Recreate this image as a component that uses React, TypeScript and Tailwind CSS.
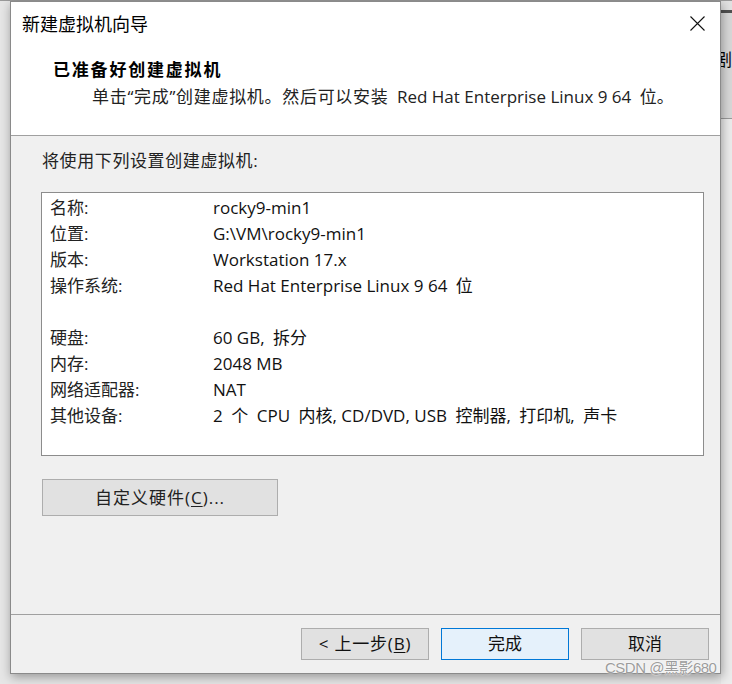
// en spaces ( ) stand for the wider gaps the dialog draws next to CJK runs
const rows: ([string, string] | null)[] = [
  ["名称:", "rocky9-min1"],
  ["位置:", "G:\\VM\\rocky9-min1"],
  ["版本:", "Workstation 17.x"],
  ["操作系统:", "Red Hat Enterprise Linux 9 64\u2002位"],
  null,
  ["硬盘:", "60 GB,\u2002拆分"],
  ["内存:", "2048 MB"],
  ["网络适配器:", "NAT"],
  ["其他设备:", "2\u2002个\u2002CPU\u2002内核, CD/DVD, USB\u2002控制器,\u2002打印机,\u2002声卡"],
];

const CloseIcon = () => (
  <svg width="15" height="15" viewBox="0 0 15 15">
    <path d="M0.5 0.5 L14.5 14.5 M14.5 0.5 L0.5 14.5" stroke="#111" strokeWidth="1.1" />
  </svg>
);

const App = () => {
  return (
    <div className="relative w-[732px] h-[684px] overflow-hidden bg-[#e6e6e6] font-['Open_Sans','Noto_Sans_CJK_SC',sans-serif] text-[17px] text-[#111]">
      <div className="h-[1px] bg-[#9a9a9a]" />
      <div className="flex h-[683px]">
        <div className="w-[10px] shrink-0" />

        {/* dialog window */}
        <div className="relative z-10 flex h-[673px] w-[711px] shrink-0 flex-col border border-[#8a8a8a] bg-[#f0f0f0] shadow-[1px_3px_10px_rgba(0,0,0,0.35)]">
          <div className="flex h-[134px] flex-col border-b border-[#a0a0a0] bg-white">
            <div className="flex h-[42px] items-center justify-between pl-[11px] pr-[15px]">
              <span className="font-['Noto_Sans_CJK_SC',sans-serif] text-[18px] leading-none text-black">
                新建虚拟机向导
              </span>
              <CloseIcon />
            </div>
            <p className="mt-[13px] pl-[42px] font-['Noto_Sans_CJK_SC',sans-serif] text-[17px] font-bold leading-[24px] tracking-[1.8px] text-black">
              已准备好创建虚拟机
            </p>
            <p className="mt-[4px] pl-[81px] leading-[24px] text-[#222]">
              <span className="tracking-[0.7px]">单击“完成”创建虚拟机。然后可以安装</span>
              {"\u2002"}Red Hat Enterprise Linux 9 64{"\u2002"}位。
            </p>
          </div>

          <div className="flex flex-1 flex-col">
            <p className="mt-[13px] pl-[31px] leading-[24px] tracking-[0.6px] text-[#222]">将使用下列设置创建虚拟机:</p>
            <div className="ml-[30px] mt-[19px] h-[264px] w-[663px] border border-[#8c8c8c] bg-white pl-[8px] pt-[2px]">
              {rows.map((r, i) =>
                r ? (
                  <div key={i} className="flex h-[26px] items-center">
                    <span className="w-[163px] shrink-0 text-[#222]">{r[0]}</span>
                    <span>{r[1]}</span>
                  </div>
                ) : (
                  <div key={i} className="h-[26px]" />
                )
              )}
            </div>
            <button className="ml-[31px] mt-[23px] flex h-[37px] w-[236px] items-center justify-center border border-[#adadad] bg-[#e1e1e1] tracking-[1px] text-[#222]">
              自定义硬件(<span className="underline underline-offset-2">C</span>)...
            </button>
          </div>

          <div className="flex h-[59px] justify-end gap-[12px] border-t border-[#a0a0a0] pr-[11px] pt-[13px]">
            <button className="flex h-[32px] w-[128px] items-center justify-center border border-[#adadad] bg-[#e1e1e1] tracking-[0.8px]">
              &lt; 上一步(<span className="underline underline-offset-2">B</span>)
            </button>
            <button className="flex h-[32px] w-[128px] items-center justify-center border border-[#0078d7] bg-[#e5f1fb]">
              完成
            </button>
            <button className="flex h-[32px] w-[128px] items-center justify-center border border-[#adadad] bg-[#e1e1e1]">
              取消
            </button>
          </div>
        </div>

        {/* background window peeking out on the right */}
        <div className="flex w-[11px] shrink-0 flex-col overflow-hidden">
          <div className="h-[9px] bg-[#e2e2e2]" />
          <div className="h-[3px] bg-[#505050]" />
          <div className="flex h-[105px] items-start bg-[#d8d8d8] pt-[37px]">
            <span className="-ml-[6px] font-['Noto_Sans_CJK_SC',sans-serif] text-[17px] leading-none text-black">剧</span>
          </div>
          <div className="h-[1px] bg-[#9a9a9a]" />
          <div className="flex-1 bg-[#ececec]" />
        </div>
      </div>

      <span className="absolute left-[605px] top-[657px] z-20 font-['Liberation_Sans','Noto_Sans_CJK_SC',sans-serif] text-[15px] tracking-[-0.5px] text-[#9c9c9c] [text-shadow:0_0_2px_#fff,0_0_1px_#fff]">
        CSDN @黑影680
      </span>
    </div>
  );
};

export default App;
